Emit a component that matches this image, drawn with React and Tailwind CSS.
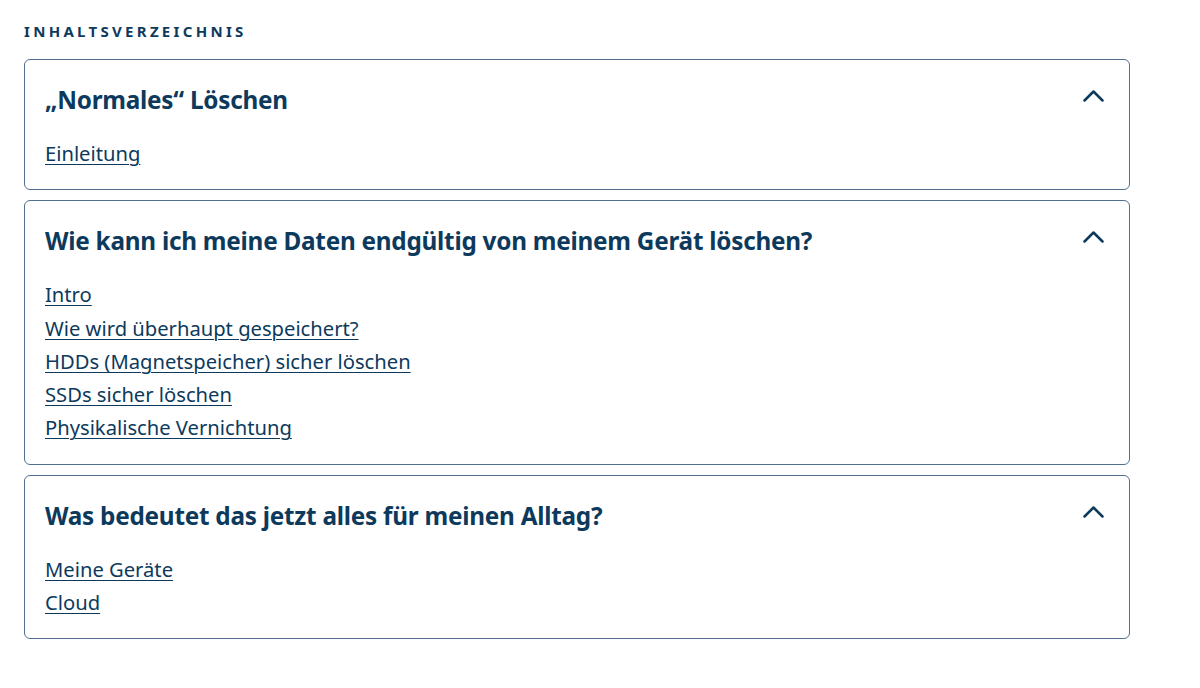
import React from 'react';

const sections = [
  { title: '„Normales“ Löschen', links: ['Einleitung'] },
  {
    title: 'Wie kann ich meine Daten endgültig von meinem Gerät löschen?',
    links: [
      'Intro',
      'Wie wird überhaupt gespeichert?',
      'HDDs (Magnetspeicher) sicher löschen',
      'SSDs sicher löschen',
      'Physikalische Vernichtung',
    ],
  },
  { title: 'Was bedeutet das jetzt alles für meinen Alltag?', links: ['Meine Geräte', 'Cloud'] },
];

function ChevronUp() {
  return (
    <svg width="23" height="13" viewBox="0 0 23 13" fill="none" className="shrink-0 mt-[9px]">
      <path d="M2.5 11.5 L11.5 2.5 L20.5 11.5" stroke="#0d3a5c" strokeWidth="2.5" strokeLinecap="round" strokeLinejoin="round" />
    </svg>
  );
}

export default function App() {
  return (
    <div className="w-[1200px] h-[688px] bg-white text-[#0d3a5c] px-6 pt-[22px]" style={{ fontFamily: '"Noto Sans", "Open Sans", sans-serif' }}>
      <h2 className="text-[15px] font-bold tracking-[0.22em] leading-[18px] mb-[19px]">INHALTSVERZEICHNIS</h2>

      <div className="w-[1106px] flex flex-col gap-[10px]">
        {sections.map((s) => (
          <div key={s.title} className="border border-[#52708e] rounded-[6px] pl-5 pr-6 pt-[20px] pb-[19px]">
            <div className="flex items-start justify-between h-10">
              <h3 className="text-[24.3px] font-bold leading-10 tracking-[-0.01em]">{s.title}</h3>
              <ChevronUp />
            </div>
            <ul className="mt-[17px] flex flex-col">
              {s.links.map((l) => (
                <li key={l} className="text-[20.2px] leading-[33.25px] h-[33.25px]">
                  <a href="#" className="underline underline-offset-[3px] decoration-1">{l}</a>
                </li>
              ))}
            </ul>
          </div>
        ))}
      </div>
    </div>
  );
}
